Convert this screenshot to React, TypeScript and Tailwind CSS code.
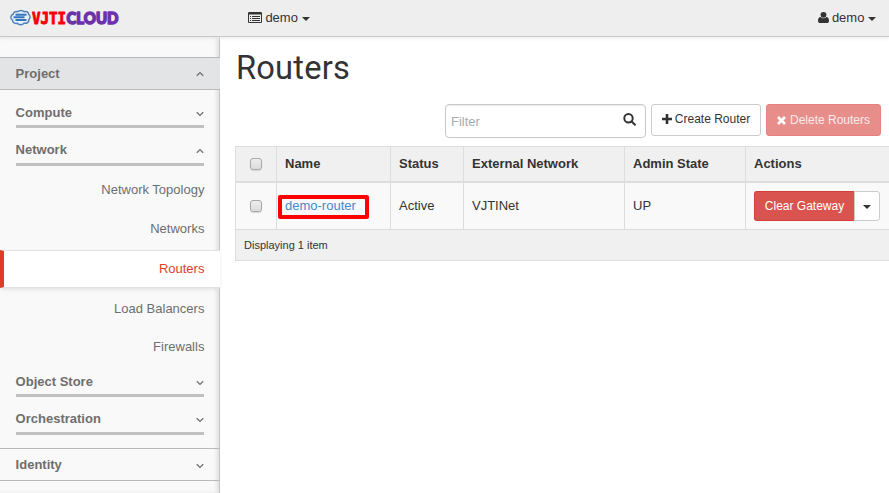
import React from "react";

const SANS = "font-['Liberation_Sans',Arial,sans-serif]";

function Caret() {
  return <span className="inline-block h-0 w-0 border-x-4 border-t-4 border-x-transparent border-t-current" />;
}

function Chevron({ up }: { up?: boolean }) {
  return (
    <svg width="8" height="6" viewBox="0 0 8 6" fill="none" stroke="currentColor" strokeWidth="1.3">
      <path d={up ? "M.8 4.800 4 1.600l3.200 3.200" : "M.8 1.200 4 4.400l3.200-3.200"} />
    </svg>
  );
}

function Logo() {
  return (
    <svg width="120" height="22" viewBox="0 0 120 22" className="block overflow-visible">
      <path
        d="M5 6.500C5 4.500 7.500 3.600 9.300 4.300c1.800-1.700 5-1.600 6.400 0 2.300-.8 4.600.6 4.700 2.500 1.900 1.200 1.800 3.800.2 4.900.2 2.400-2.300 4.200-4.800 3.500-1.600 2-5.200 2-6.600.2-2.400.7-5-.8-4.900-3C1.700 11.300 2 7.600 5 6.500Z"
        transform="translate(.3 .2) scale(1 1.050)"
        fill="#e6eef7" stroke="#4a7fb8" strokeWidth="1.400"
      />
      <path d="M7.500 7.700h11M5.500 10.300h11M7.500 12.900h11" stroke="#3576b8" strokeWidth="2" />
      <g strokeLinejoin="round">
        <text x="24" y="17.300" textLength="34" lengthAdjust="spacingAndGlyphs" fontFamily="DejaVu Sans Mono, monospace" fontWeight="700" fontSize="16.500" fill="#f80008" stroke="#f80008" strokeWidth="1">VJTI</text>
        <text x="58.500" y="17.300" textLength="52" lengthAdjust="spacingAndGlyphs" fontFamily="Lato, sans-serif" fontWeight="900" fontSize="16.500" fill="#7030a0" stroke="#6d33ab" strokeWidth="1.500">CLOUD</text>
      </g>
    </svg>
  );
}

function ListIcon() {
  return (
    <svg width="14" height="11" viewBox="0 0 14 11" fill="#333">
      <path fillRule="evenodd" d="M1.200 0h11.600Q14 0 14 1.200v8.600q0 1.200-1.200 1.200H1.200Q0 11 0 9.800V1.200Q0 0 1.200 0ZM1 2.500v7.200q0 .3.300.3h11.400q.3 0 .3-.3V2.500Z" />
      <path d="M2 4h1v1H2zm2 0h8v1H4zM2 6h1v1H2zm2 0h8v1H4zM2 8h1v1H2zm2 0h8v1H4z" />
    </svg>
  );
}

function UserIcon() {
  return (
    <svg width="11" height="11" viewBox="0 0 11 12" preserveAspectRatio="none" fill="#333">
      <ellipse cx="5.500" cy="3.100" rx="2.900" ry="3.100" />
      <path d="M2.600 5.500C.8 5.700 0 7.300 0 9.500 0 11 .9 12 2.200 12h6.600C10.100 12 11 11 11 9.500c0-2.200-.8-3.800-2.600-4C7.500 6.500 6.500 6.900 5.500 6.900S3.500 6.500 2.600 5.500Z" />
    </svg>
  );
}

function Menu({ icon }: { icon: React.ReactNode }) {
  return (
    <div className="flex items-center">
      <span className="pb-px">{icon}</span>
      <span className="mr-[3.6px] ml-[3px]">demo</span>
      <span className="flex pt-[2px]"><Caret /></span>
    </div>
  );
}

function Panel({ label, open, className }: { label: string; open?: boolean; className: string }) {
  return (
    <div className={`mx-4 flex shrink-0 items-center justify-between border-b-3 border-[#c0c0c0] font-bold ${className}`}>
      <span className="-ml-[0.4px]">{label}</span>
      <span className="pt-[2px]"><Chevron up={open} /></span>
    </div>
  );
}

function Item({ label, className }: { label: string; className: string }) {
  return <a className={`flex shrink-0 items-center justify-end pr-[15.6px] ${className}`}>{label}</a>;
}

function Sidebar() {
  return (
    <aside className="flex w-[220px] shrink-0 flex-col bg-[#f9f9f9] pt-5 text-[#6e6e6e] shadow-[inset_-1px_0_0_#c4c4c4,inset_-4px_0_4px_-1px_#dedede]">
      <div className="flex h-[33px] shrink-0 items-center justify-between border-y border-[#b9b9b9] bg-[#e2e4e5] pr-4 pl-[15.6px] font-bold">
        <span>Project</span>
        <Chevron up />
      </div>
      <Panel label="Compute" className="h-[38px] pt-[11px]" />
      <Panel label="Network" open className="h-[38px] pt-[9px]" />
      <Item label="Network Topology" className="mt-[4px] h-[40px]" />
      <Item label="Networks" className="h-[40px] pb-[2px]" />
      <div className="flex h-[38px] shrink-0 items-center justify-end border-y border-l-4 border-y-[#e2e2e2] border-l-[#dd3d26] bg-white pr-[15.6px] text-[#dd3d26] shadow-[0_2px_4px_-1px_#dcdcdc]">Routers</div>
      <Item label="Load Balancers" className="h-[40px] pt-[2px]" />
      <Item label="Firewalls" className="h-[38px]" />
      <Panel label="Object Store" className="h-[31px] pt-[3px]" />
      <Panel label="Orchestration" className="h-[38px] pt-[9px]" />
      <div className="mt-[13px] flex h-[33px] shrink-0 items-center justify-between border-y border-[#b9b9b9] pr-4 pl-[15.6px] font-bold">
        <span>Identity</span>
        <span className="pt-[2px]"><Chevron /></span>
      </div>
    </aside>
  );
}

function Checkbox() {
  return <span className="block h-3 w-3 rounded-[3px] border border-[#a8a8a8] bg-linear-to-b from-[#eeeeee] to-[#dcdcdc] shadow-[0_1px_1px_#d5d5d5]" />;
}

const columns = "grid grid-cols-[41px_114px_73px_161px_121px_143px]";
const cell = "flex items-center border-l border-[#dddddd] pl-2";

function RouterTable() {
  return (
    <div className="w-[654px] border-y border-[#dddddd]">
      <div className={`${columns} h-9 border-b-2 border-[#dddddd] bg-[#f0f0f0] font-bold`}>
        <div className={`${cell} pl-[14px]`}><Checkbox /></div>
        <div className={cell}>Name</div>
        <div className={cell}>Status</div>
        <div className={cell}>External Network</div>
        <div className={cell}>Admin State</div>
        <div className={cell}>Actions</div>
      </div>
      <div className={`${columns} h-[46px] bg-[#f9f9f9]`}>
        <div className={`${cell} pl-[14px]`}><Checkbox /></div>
        <div className={`${cell} relative text-[#428bca]`}>
          demo-router
          <span className="absolute top-[12px] left-[1px] h-6 w-[91px] rounded-[2px] border-4 border-[#ff0000]" />
        </div>
        <div className={cell}>Active</div>
        <div className={cell}>VJTINet</div>
        <div className={cell}>UP</div>
        <div className={cell}>
          <button className="h-[30px] w-[100px] rounded-l-[3px] border border-r-0 border-[#d43f3a] bg-[#d9534f] text-xs text-white">Clear Gateway</button>
          <button className="flex h-[30px] w-[26px] items-center justify-center rounded-r-[3px] border border-[#cccccc] bg-white pt-px"><Caret /></button>
        </div>
      </div>
      <div className="flex h-[31px] items-center border-t border-l border-[#dddddd] bg-[#f0f0f0] pl-2 text-[11px]">Displaying 1 item</div>
    </div>
  );
}

export default function App() {
  return (
    <div className={`flex h-[493px] w-[889px] flex-col overflow-hidden bg-white text-[13px] leading-[18px] text-[#333333] ${SANS}`}>
      <header className="relative z-10 flex h-[37px] shrink-0 items-center justify-between border-b border-[#c8c8c8] bg-[#eeeeee] pr-[13px] pl-2 shadow-[0_1px_4px_#e8e8e8]">
        <div className="flex items-center">
          <div className="w-[240.4px]"><Logo /></div>
          <Menu icon={<ListIcon />} />
        </div>
        <Menu icon={<UserIcon />} />
      </header>
      <div className="flex min-h-0 grow">
        <Sidebar />
        <main className="flex min-w-0 grow flex-col pl-[15px]">
          <h1 className="mt-[10px] h-[40px] origin-left scale-x-[0.96] pl-px font-[Roboto,sans-serif] text-[34px] leading-10 tracking-[0.2px]">Routers</h1>
          <div className="mt-[17px] mb-2 flex h-[34px] items-start justify-end gap-[5px] pr-2">
            <div className="flex h-[34px] w-[201px] items-center justify-between rounded-[4px] border border-[#c8c8c8] pr-[9.5px] pl-[5px] text-[#aaaaaa] shadow-[inset_0_1px_1px_#ececec]">
              <span className="pt-[2px]">Filter</span>
              <svg width="13" height="13" viewBox="0 0 13 13" fill="none" stroke="#333" strokeWidth="2" className="mb-[3px]">
                <circle cx="5.500" cy="5.300" r="4.200" />
                <path d="m8.600 8.400 3.300 3.400" strokeLinecap="round" />
              </svg>
            </div>
            <button className="flex h-8 w-[110px] items-center justify-center rounded-[3px] border border-[#cccccc] bg-white pb-[2px] text-xs">
              <svg width="10" height="10" viewBox="0 0 10 10" className="mr-[3px] mb-px"><path d="M5 0v10M0 5h10" stroke="#333" strokeWidth="2.600" /></svg>
              Create Router
            </button>
            <button className="flex h-8 w-[115px] items-center justify-center rounded-[3px] border border-[#e5817e] bg-[#e78e8b] text-xs text-[#fbeaea]">
              <svg width="9" height="9" viewBox="0 0 9 9" className="mr-1"><path d="m1 1 7 7M8 1 1 8" stroke="#fff" strokeWidth="2.700" /></svg>
              Delete Routers
            </button>
          </div>
          <RouterTable />
        </main>
      </div>
    </div>
  );
}
